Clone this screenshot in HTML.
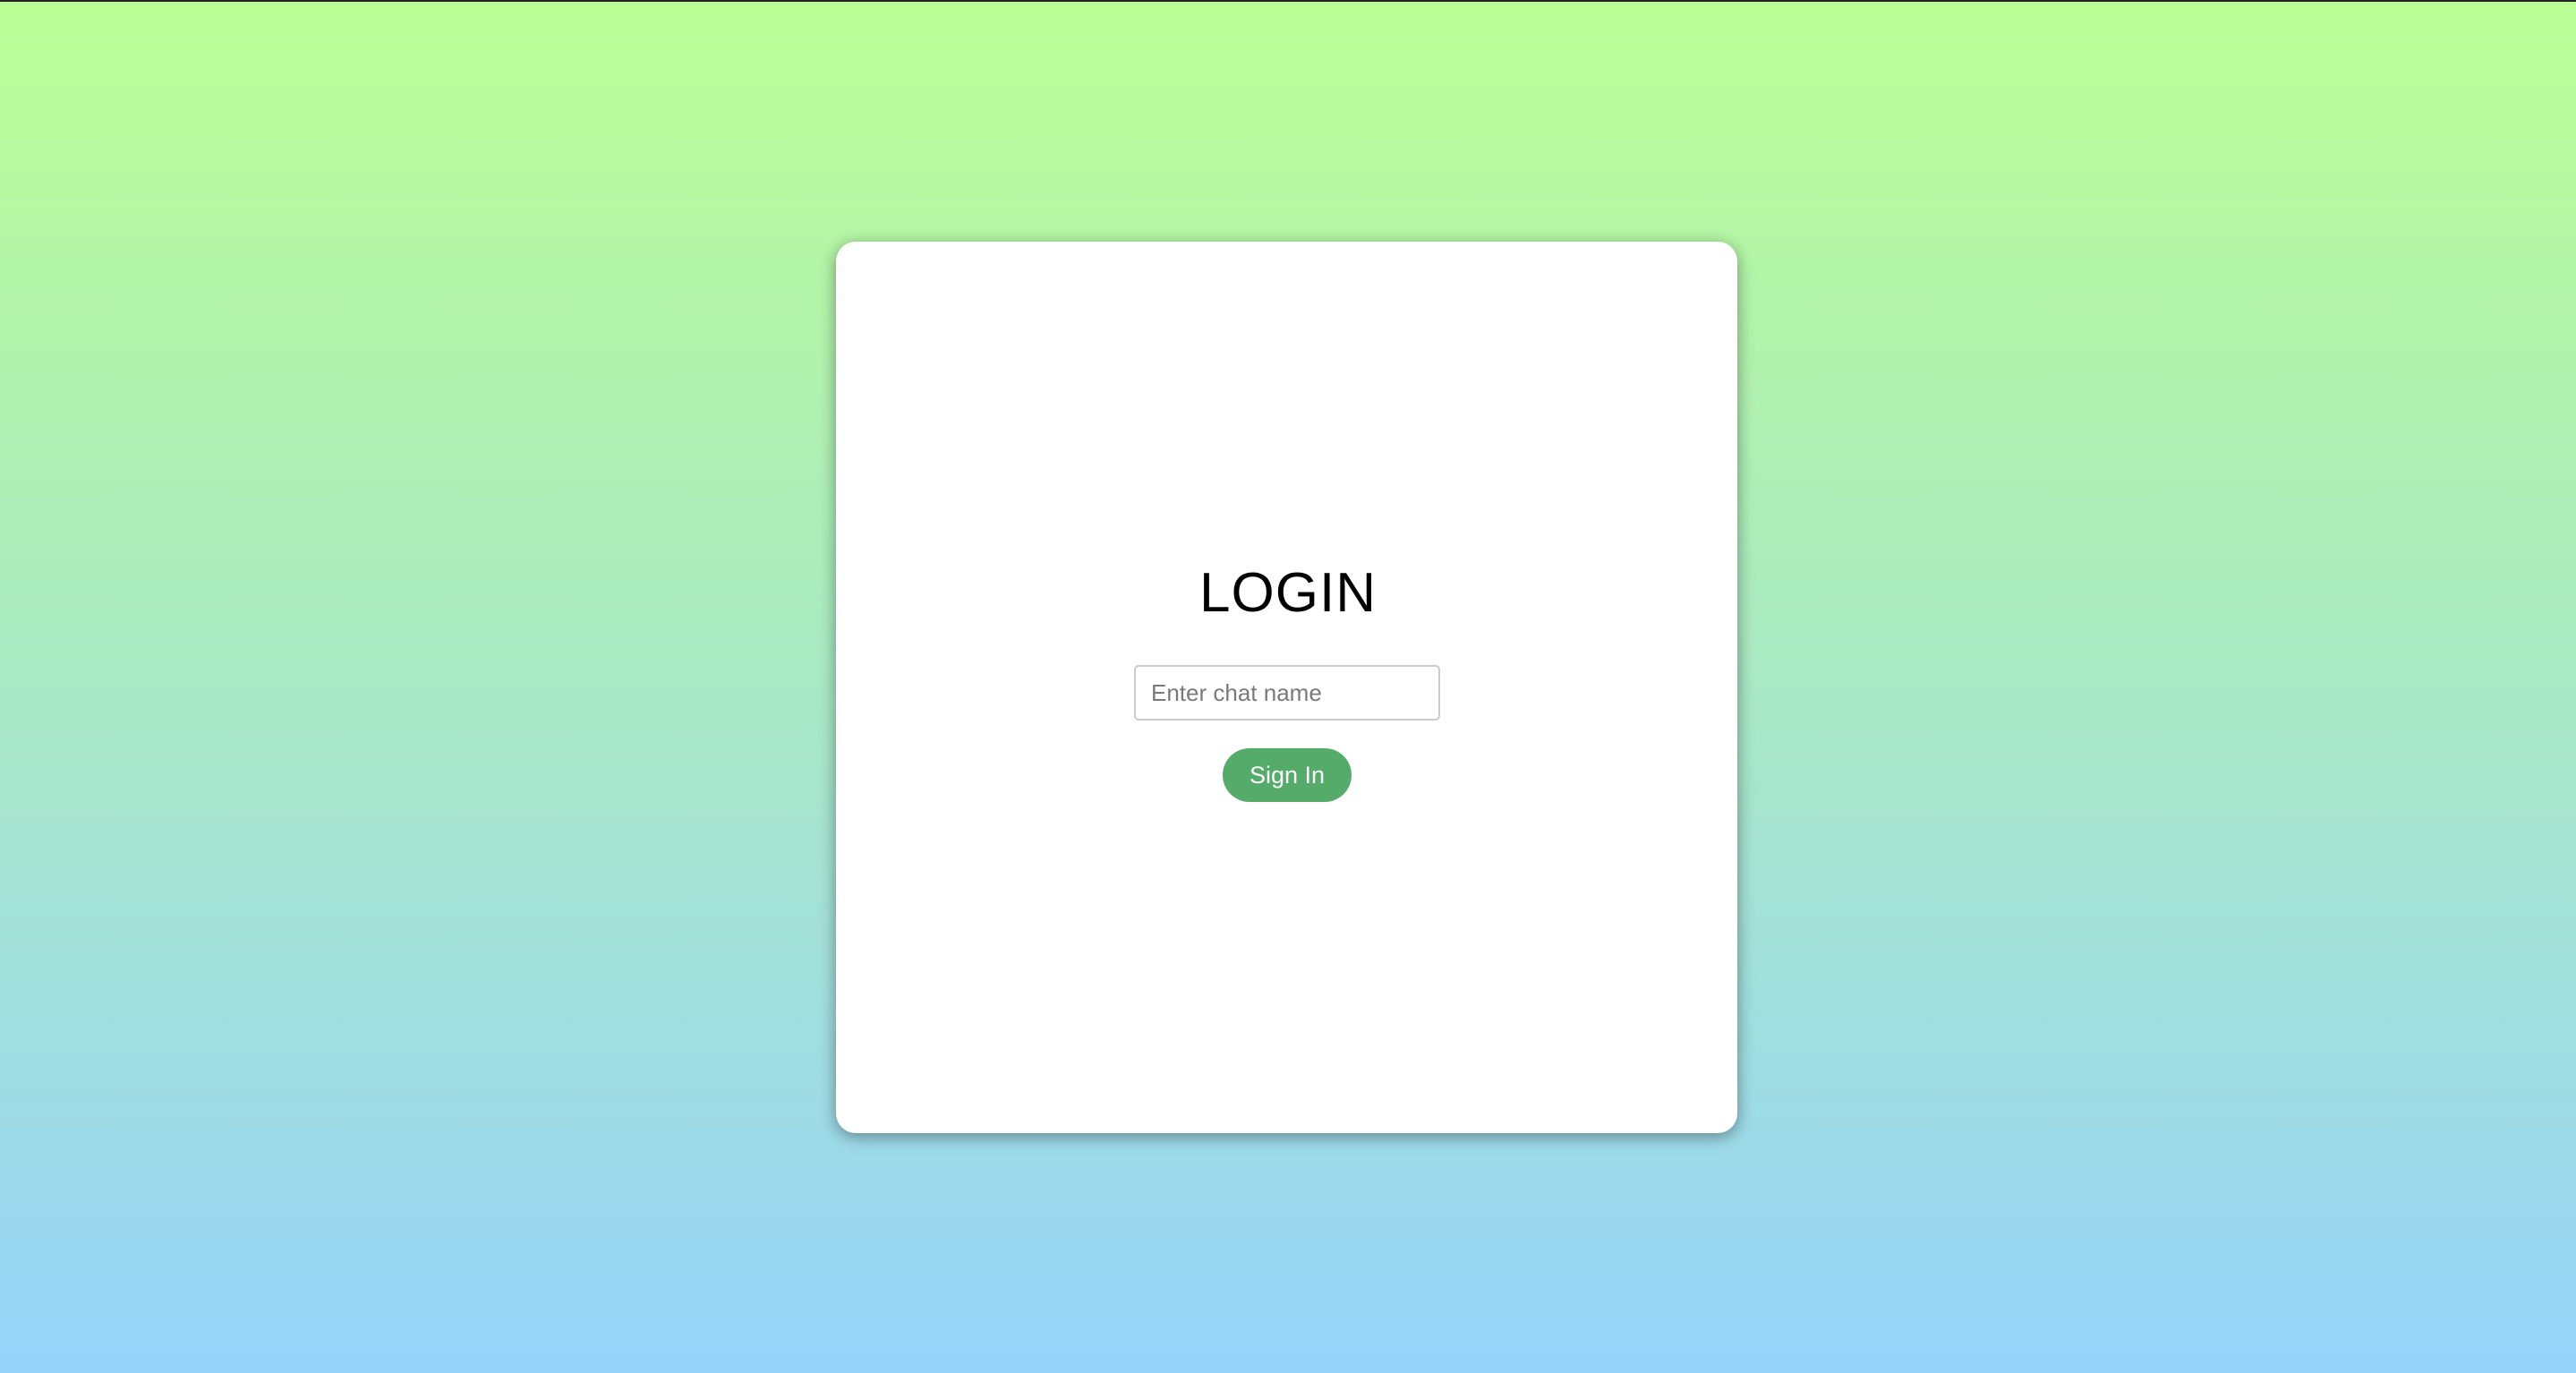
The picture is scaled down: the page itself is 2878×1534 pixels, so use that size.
<!DOCTYPE html>
<html><head><meta charset="utf-8"><style>
html,body{margin:0;padding:0;}
body{width:2878px;height:1534px;overflow:hidden;position:relative;
background:linear-gradient(to bottom,#bbfe95 0%,#acedbb 40%,#a2e0da 70%,#97d4fb 100%);
font-family:"Liberation Sans",sans-serif;}
.topline{position:absolute;left:0;top:0;width:2878px;height:2px;background:#222;}
.card{position:absolute;left:934px;top:270px;width:1007px;height:996px;background:#fff;border-radius:22px;
box-shadow:0 4px 18px rgba(0,0,0,0.4);}
h1{position:absolute;left:0;right:0;top:618px;margin:0;text-align:center;font-weight:400;font-size:62px;color:#000;line-height:90px;letter-spacing:1px;}
.inp{position:absolute;left:1267px;top:743px;width:342px;height:62px;box-sizing:border-box;border:2px solid #ccc;border-radius:5px;
font-size:26px;color:#7a7a7a;line-height:58px;padding-left:17px;}
.btn{position:absolute;left:1366px;top:836px;width:144px;height:60px;border-radius:30px;background:#55ab6a;color:#fff;
font-size:27px;text-align:center;line-height:60px;}
</style></head><body>
<div class="topline"></div>
<div class="card"></div>
<h1>LOGIN</h1>
<div class="inp">Enter chat name</div>
<div class="btn">Sign In</div>
</body></html>
